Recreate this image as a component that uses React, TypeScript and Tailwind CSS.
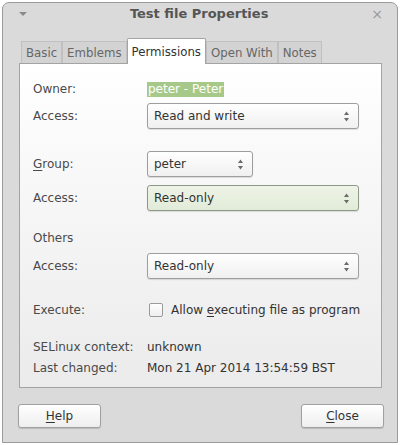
import React from 'react';

const Arrows: React.FC = () => (
  <svg width="7" height="13" viewBox="0 0 7 13" className="shrink-0">
    <path d="M3.5 1.5 L6 5 L1 5 Z" fill="#6a6a6a" />
    <path d="M3.5 11.5 L6 8 L1 8 Z" fill="#6a6a6a" />
  </svg>
);

const Combo: React.FC<{ value: string; width: string; focused?: boolean }> = ({ value, width, focused }) => (
  <div
    className={`${width} h-[26px] flex items-center justify-between pl-[6px] pr-[8px] rounded-[3px] border shadow-[0_1px_1px_rgba(0,0,0,0.12)] ${
      focused
        ? 'border-[#8f9987] bg-gradient-to-b from-[#eef4e7] to-[#e2ebd8]'
        : 'border-[#9e9e9e] bg-gradient-to-b from-[#ffffff] to-[#f0f0f0]'
    }`}
  >
    <span className="text-[#333]">{value}</span>
    <Arrows />
  </div>
);

const Label: React.FC<{ children: React.ReactNode }> = ({ children }) => (
  <div className="w-[114px] shrink-0 text-[#4a4a4a]">{children}</div>
);

const tabs = ['Basic', 'Emblems', 'Permissions', 'Open With', 'Notes'];

export default function App() {
  return (
    <div className="w-[400px] h-[445px] bg-white pt-[2px] pl-[2px] font-['DejaVu_Sans',sans-serif] text-[12px]">
      <div className="w-[396px] h-[441px] border border-[#9a9a9a] rounded-t-[7px] bg-[#dadada] flex flex-col">
        {/* Title bar */}
        <div className="h-[22px] flex items-center justify-between pl-[16px] pr-[14px]">
          <svg width="8" height="5" viewBox="0 0 8 5">
            <path d="M0 0 L8 0 L4 4 Z" fill="#8a8a8a" />
          </svg>
          <span className="font-bold text-[13px] text-[#555]">Test file Properties</span>
          <span className="text-[#999] text-[14px] leading-none">×</span>
        </div>

        {/* Tabs */}
        <div className="flex items-end ml-[18px] mt-[13px] h-[25px] relative z-10 text-[11.75px]">
          {tabs.map((t) =>
            t === 'Permissions' ? (
              <div
                key={t}
                className="h-[26px] -mb-[1px] px-[4px] bg-white border border-b-0 border-[#a4a4a4] rounded-t-[2px] flex items-start pt-[5px] text-[#333]"
              >
                {t}
              </div>
            ) : (
              <div
                key={t}
                className="h-[22px] px-[4px] pt-[3px] bg-[#d3d3d3] border border-b-0 border-[#c0c0c0] flex items-center text-[#666]"
              >
                {t}
              </div>
            )
          )}
        </div>

        {/* Panel */}
        <div className="ml-[16px] w-[363px] h-[325px] border border-[#a4a4a4] bg-gradient-to-b from-[#ffffff] to-[#ebebeb] pl-[13px] flex flex-col">
          <div className="mt-[15px] h-[20px] flex items-center">
            <Label>Owner:</Label>
            <span className="bg-[#a6c98a] text-white px-[1px] leading-[15px]">peter - Peter</span>
          </div>
          <div className="mt-[4px] flex items-center">
            <Label>Access:</Label>
            <Combo value="Read and write" width="w-[212px]" />
          </div>
          <div className="mt-[22px] flex items-center">
            <Label>
              <span className="underline underline-offset-2">G</span>roup:
            </Label>
            <Combo value="peter" width="w-[106px]" />
          </div>
          <div className="mt-[8px] flex items-center">
            <Label>Access:</Label>
            <Combo value="Read-only" width="w-[212px]" focused />
          </div>
          <div className="mt-[17px] h-[20px] flex items-center text-[#4a4a4a]">Others</div>
          <div className="mt-[5px] flex items-center">
            <Label>Access:</Label>
            <Combo value="Read-only" width="w-[212px]" />
          </div>
          <div className="mt-[21px] h-[20px] flex items-center">
            <Label>Execute:</Label>
            <div className="ml-[2px] w-[14px] h-[14px] rounded-[2px] border border-[#9a9a9a] bg-gradient-to-b from-white to-[#eeeeee]" />
            <span className="ml-[8px] text-[#333]">
              Allow <span className="underline underline-offset-2">e</span>xecuting file as program
            </span>
          </div>
          <div className="mt-[17px] h-[20px] flex items-center">
            <Label>SELinux context:</Label>
            <span className="text-[#333]">unknown</span>
          </div>
          <div className="mt-[1px] h-[20px] flex items-center">
            <Label>Last changed:</Label>
            <span className="text-[#333]">Mon 21 Apr 2014 13:54:59 BST</span>
          </div>
        </div>

        {/* Buttons */}
        <div className="flex justify-between ml-[15px] mr-[13px] mt-[16px]">
          <button className="w-[83px] h-[24px] rounded-[3px] border border-[#a0a0a0] bg-gradient-to-b from-white to-[#eeeeee] shadow-[0_1px_1px_rgba(0,0,0,0.15)] text-[#333]">
            <span className="underline underline-offset-2">H</span>elp
          </button>
          <button className="w-[83px] h-[24px] rounded-[3px] border border-[#a0a0a0] bg-gradient-to-b from-white to-[#eeeeee] shadow-[0_1px_1px_rgba(0,0,0,0.15)] text-[#333]">
            <span className="underline underline-offset-2">C</span>lose
          </button>
        </div>
      </div>
    </div>
  );
}
